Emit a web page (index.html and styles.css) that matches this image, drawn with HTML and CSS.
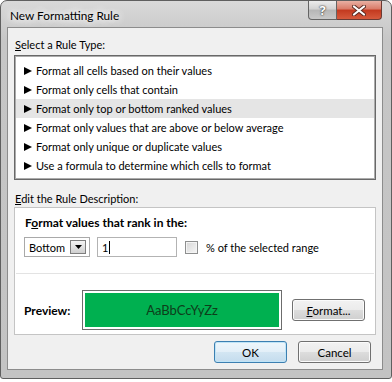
FILE: index.html
```html
<!DOCTYPE html>
<html lang="en">
<head>
    <meta charset="UTF-8">
    <meta name="viewport" content="width=device-width, initial-scale=1.0">
    <title>New Formatting Rule</title>
    <link rel="stylesheet" href="styles.css">
</head>
<body>

    <div class="window">

        <div class="titlebar">
            <span class="title">New Formatting Rule</span>
            <div class="caption-buttons">
                <span class="cap-btn help">?</span>
                <span class="cap-btn close">
                    <svg width="14" height="11" viewBox="0 0 14 11">
                        <path d="M2 1.5 L12 9.5 M12 1.5 L2 9.5" stroke="#5a2a22" stroke-width="4" stroke-linecap="round"/>
                        <path d="M2 1.5 L12 9.5 M12 1.5 L2 9.5" stroke="#fff" stroke-width="2.2" stroke-linecap="round"/>
                    </svg>
                </span>
            </div>
        </div>

        <div class="client">

            <div class="group-label"><u>S</u>elect a Rule Type:</div>

            <ul class="rule-list">
                <li><span class="arrow"></span>Format all cells based on their values</li>
                <li><span class="arrow"></span>Format only cells that contain</li>
                <li class="selected"><span class="arrow"></span>Format only top or bottom ranked values</li>
                <li><span class="arrow"></span>Format only values that are above or below average</li>
                <li><span class="arrow"></span>Format only unique or duplicate values</li>
                <li><span class="arrow"></span>Use a formula to determine which cells to format</li>
            </ul>

            <div class="group-label edit-label"><u>E</u>dit the Rule Description:</div>

            <div class="rule-panel">

                <div class="rule-top">
                    <div class="rule-heading">F<u>o</u>rmat values that rank in the:</div>
                    <div class="rule-controls">
                        <div class="combo">
                            <span>Bottom</span>
                            <span class="combo-btn">
                                <svg width="7" height="4" viewBox="0 0 7 4"><path d="M0 0 H7 L3.5 4 Z" fill="#000"/></svg>
                            </span>
                        </div>
                        <div class="textbox">1<span class="caret"></span></div>
                        <span class="checkbox"></span>
                        <span class="check-label">% of the selected ran<u>g</u>e</span>
                    </div>
                </div>

                <div class="preview-row">
                    <span class="preview-label">Preview:</span>
                    <div class="preview-box">
                        <div class="preview-fill">AaBbCcYyZz</div>
                    </div>
                    <button class="btn format-btn"><u>F</u>ormat...</button>
                </div>

            </div>

            <div class="dialog-buttons">
                <button class="btn ok-btn">OK</button>
                <button class="btn">Cancel</button>
            </div>

        </div>

    </div>

</body>
</html>
```

FILE: styles.css
```css
* {
    box-sizing: border-box;
}

:root {
    --frame: #c9c9c9;
    --client: #f0f0f0;
    --select: #e5e5e5;
    --green: #00b050;
    --green-text: #0e3d1a;
}

body {
    margin: 0;
    background-color: #fff;
    font-family: Lato, "Noto Sans", sans-serif;
    font-size: 11px;
    color: #000;
}

.window {
    width: 392px;
    height: 379px;
    border: 1px solid #5f5f5f;
    border-radius: 7px 7px 3px 3px;
    background: linear-gradient(#d9d9d9, #c6c6c6 40px, #c3c3c3);
    padding: 0 8px 8px 6px;
    display: flex;
    flex-direction: column;
}

/* title bar */

.titlebar {
    height: 26px;
    display: flex;
    align-items: flex-start;
}

.title {
    padding: 6px 0 0 3px;
    line-height: 17px;
    font-size: 11.8px;
    text-shadow: 0 0 6px #fff, 0 0 10px #fff, 0 0 14px #fff;
}

.caption-buttons {
    margin-left: auto;
    margin-right: 1px;
    display: flex;
}

.cap-btn {
    height: 19px;
    display: flex;
    align-items: center;
    justify-content: center;
    border: 1px solid #646464;
    border-top: 0;
}

.help {
    width: 29px;
    border-radius: 0 0 0 4px;
    background: linear-gradient(#ececec, #d2d2d2 45%, #b6b6b6 50%, #c9c9c9);
    color: #fff;
    font-family: "Noto Sans", sans-serif;
    font-weight: bold;
    font-size: 13px;
    text-shadow: 0 0 2px #333, 0 0 1px #333;
}

.close {
    width: 45px;
    border-left: 0;
    border-color: #6b3a33;
    border-radius: 0 0 4px 0;
    background: linear-gradient(#e9b0a3, #d97a67 45%, #c3391f 50%, #d65a3d);
}

/* client area */

.client {
    height: 343px;
    border: 1px solid #8c8c8c;
    background-color: var(--client);
    padding: 9px 6px 0 6px;
}

.group-label {
    line-height: 15px;
    padding-left: 1px;
}

.edit-label {
    margin-top: 11px;
}

.rule-list {
    list-style-type: none;
    margin: 3px 0 0;
    height: 125px;
    padding: 5px 1px 4px;
    background-color: #fff;
    border: 1px solid #686868;
    box-shadow: inset 0 0 0 1px #ababab;
}

.rule-list > li {
    height: 19px;
    line-height: 19px;
    padding-left: 8px;
    display: flex;
    align-items: center;
}

.rule-list > li.selected {
    background-color: var(--select);
}

.arrow {
    width: 0;
    height: 0;
    border-left: 8px solid #000;
    border-top: 4.5px solid transparent;
    border-bottom: 4.5px solid transparent;
    margin-right: 4px;
}

/* rule description */

.rule-panel {
    margin-top: 1px;
    height: 128px;
    background-color: #fff;
    border: 1px solid #c4c4c4;
}

.rule-top {
    margin: 0 1px;
    padding: 7px 0 16px 8px;
    border-bottom: 1px solid #e3e3e3;
}

.rule-heading {
    font-weight: bold;
    font-size: 12px;
    line-height: 16px;
    padding-left: 1px;
}

.rule-controls {
    margin-top: 6px;
    height: 20px;
    display: flex;
    align-items: center;
}

.combo {
    width: 66px;
    height: 20px;
    border: 1px solid #a9a9a9;
    padding: 0 3px 0 4px;
    display: flex;
    align-items: center;
    justify-content: space-between;
}

.combo-btn {
    width: 16px;
    height: 14px;
    border: 1px solid #7e7e7e;
    background: linear-gradient(#f4f4f4, #e2e2e2 50%, #cfcfcf);
    display: flex;
    align-items: center;
    justify-content: center;
}

.textbox {
    margin-left: 7px;
    width: 80px;
    height: 20px;
    border: 1px solid #b3b3b3;
    padding-left: 4px;
    display: flex;
    align-items: center;
}

.caret {
    width: 1px;
    height: 13px;
    background-color: #000;
    margin-left: 1px;
}

.checkbox {
    margin-left: 8px;
    width: 13px;
    height: 13px;
    border: 1px solid #8e8f8f;
    background: linear-gradient(135deg, #d6d6d6, #f6f6f6);
    box-shadow: inset 0 0 0 1px #f4f4f4;
}

.check-label {
    margin-left: 8px;
}

.preview-row {
    height: 60px;
    padding: 16px 0 4px 9px;
    display: flex;
    align-items: center;
}

.preview-label {
    width: 58px;
    font-weight: bold;
    font-size: 12px;
}

.preview-box {
    width: 200px;
    height: 40px;
    border: 1px solid #6c6c6c;
    padding: 2px;
    background-color: #fff;
}

.preview-fill {
    height: 100%;
    background-color: var(--green);
    color: var(--green-text);
    font-size: 13px;
    display: flex;
    align-items: center;
    justify-content: center;
}

/* buttons */

.btn {
    width: 73px;
    height: 22px;
    padding: 0;
    font-family: inherit;
    font-size: 11.5px;
    color: #000;
    border: 1px solid #707070;
    border-radius: 3px;
    background: linear-gradient(#f2f2f2, #ebebeb 50%, #dddddd 50%, #cfcfcf);
    box-shadow: inset 0 0 0 1px #fbfbfb;
}

.format-btn {
    margin-left: 10px;
}

.ok-btn {
    border-color: #3c7fb1;
    background: linear-gradient(#eef6fb, #e3eff8 50%, #d3e6f3 50%, #c4dcee);
    box-shadow: inset 0 0 0 1px #bfe4f7;
}

.dialog-buttons {
    margin-top: 6px;
    padding-right: 5px;
    display: flex;
    justify-content: flex-end;
    gap: 11px;
}
```
